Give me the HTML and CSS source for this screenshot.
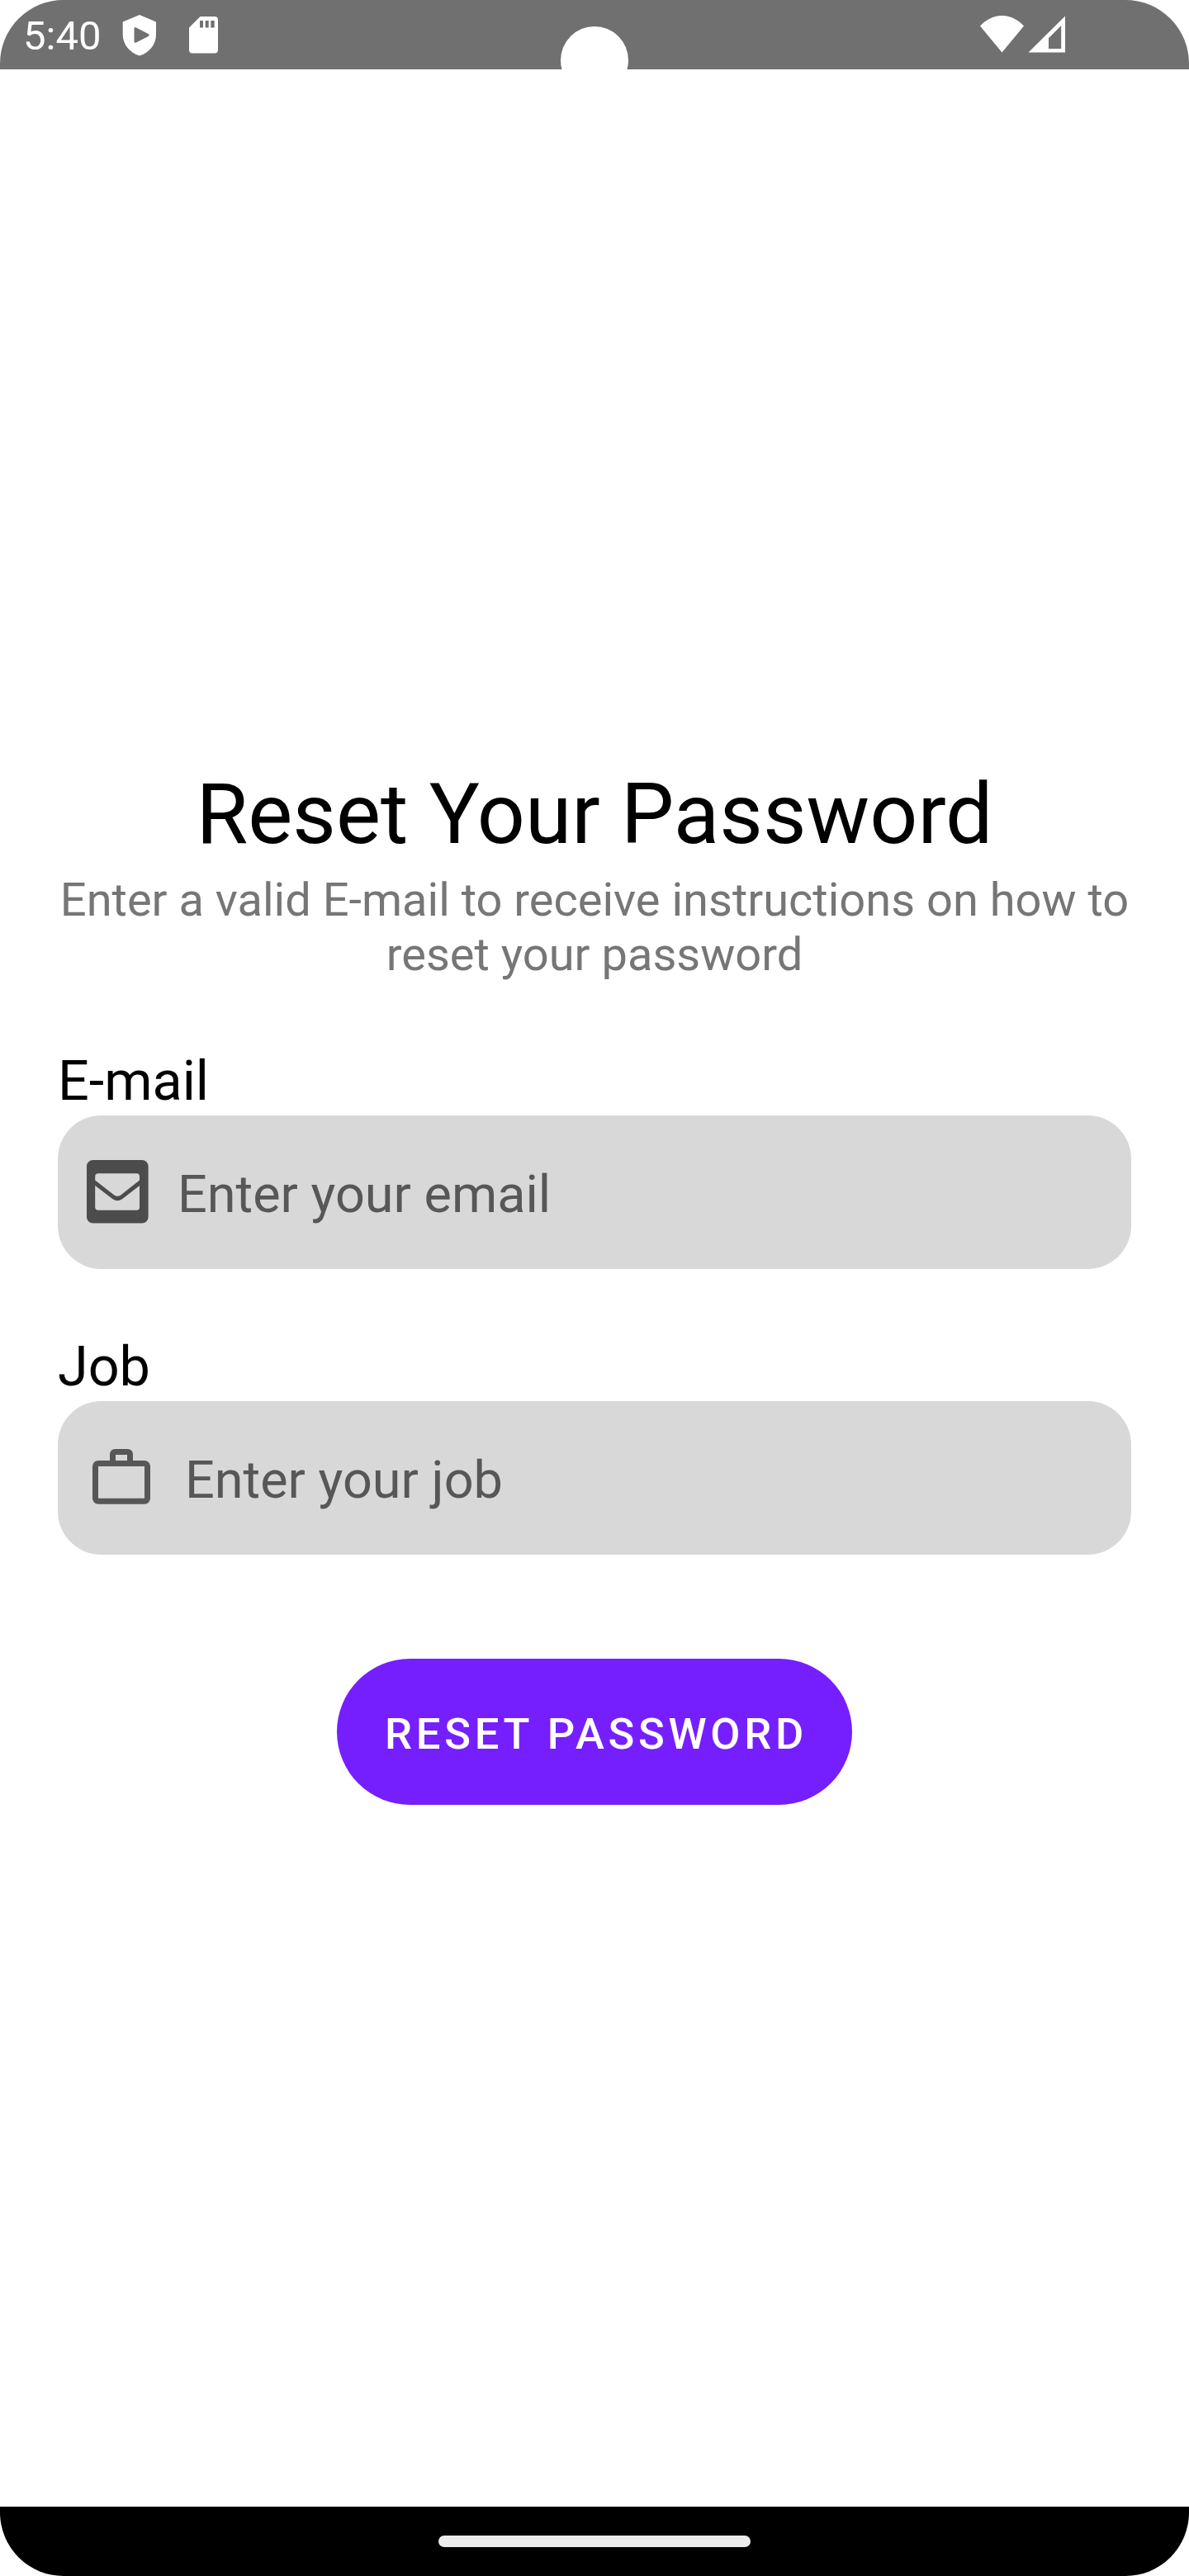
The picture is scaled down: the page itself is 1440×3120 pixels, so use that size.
FILE: index.html
```html
<!DOCTYPE html>
<html lang="en">
<head>
<meta charset="utf-8">
<title>Reset Your Password</title>
<link rel="stylesheet" href="styles.css">
</head>
<body>
<div class="screen">
  <header class="status-bar">
    <span class="clock">5:40</span>
    <svg class="shield" width="42" height="50" viewBox="0 0 42 50"><path fill="#fff" fill-rule="evenodd" d="M21 0 41 8.500V24C41 36 32.500 46 21 49.500 9.500 46 .7 36 .7 24V8.500ZM14.500 16.500V32.500Q14.700 34.500 17 33.500L32 25.700Q33.500 24.500 32 23.200L17 15.400Q14.700 14.500 14.500 16.500Z"/></svg>
    <svg class="sd-card" width="36" height="45" viewBox="0 0 36 45"><path fill="#fff" fill-rule="evenodd" d="M13.500 0H31Q35 0 35 4V40.500Q35 44.500 31 44.500H4Q0 44.500 0 40.500V13.500ZM13 5V13.500H17V5ZM19.700 5V13.500H23.700V5ZM26.300 5V13.500H30.700V5Z"/></svg>
    <svg class="wifi" width="54" height="45" viewBox="0 0 54 45"><path fill="#fff" d="M0 12.500C15-4.200 38-4.200 53 12.500L26.500 44.500Z"/></svg>
    <svg class="signal" width="46" height="45" viewBox="0 0 46 45"><path fill="#fff" fill-rule="evenodd" d="M45 .5V44.500H.5ZM40.200 12 25 27.200V40H40.200Z"/></svg>
    <span class="camera"></span>
  </header>
  <main class="content">
    <h1 class="title">Reset Your Password</h1>
    <p class="subtitle">Enter a valid E-mail to receive instructions on how to reset your password</p>
    <section class="group">
      <div class="label">E-mail</div>
      <div class="field">
        <svg class="mail" width="75" height="77" viewBox="0 0 75 77"><rect width="74.600" height="76.500" rx="7.500" fill="#4c4c4c"/><path fill="#d8d8d8" d="M14.500 16.300H60.500Q64 16.300 64 20V24.500L41.500 42.200Q37.300 45.300 33 42.200L10.200 24.500V20Q10.200 16.300 14 16.300ZM10.200 31 31.500 47.300Q37.300 51.200 43 47.300L64 31V57Q64 60.800 60.500 60.800H14Q10.200 60.800 10.200 57Z"/></svg>
        <span class="hint">Enter your email</span>
      </div>
    </section>
    <section class="group">
      <div class="label">Job</div>
      <div class="field">
        <svg class="briefcase" width="71" height="67" viewBox="0 0 71 67"><g fill="none" stroke="#575757" stroke-width="7"><rect x="3.500" y="17.500" width="63" height="45.700" rx="3.500"/><path d="M24.500 17.500V7Q24.500 3.500 28 3.500H42Q45.500 3.500 45.500 7V17.500"/></g></svg>
        <span class="hint">Enter your job</span>
      </div>
    </section>
    <button class="submit" type="button">RESET PASSWORD</button>
  </main>
  <footer class="nav-bar"><span class="handle"></span></footer>
</div>
</body>
</html>
```
FILE: styles.css
```css
body {
  margin: 0;
  background: #fff;
  font-family: Roboto, sans-serif;
}

.screen {
  display: flex;
  flex-direction: column;
  width: 1440px;
  height: 3120px;
  overflow: hidden;
  border-radius: 77px;
}

.status-bar {
  position: relative;
  display: flex;
  align-items: flex-start;
  box-sizing: border-box;
  height: 84px;
  padding: 15px 150px 0 28px;
  overflow: hidden;
  background: #707070;
}

.clock {
  width: 120px;
  color: #fff;
  font-size: 49px;
  line-height: 58px;
}

.shield { margin-top: 3px; }
.sd-card { margin: 5px 0 0 39px; }
.wifi { margin: 4px 4px 0 auto; }
.signal { margin: 4px -1px 0 0; }

.camera {
  position: absolute;
  top: 32px;
  left: 679px;
  width: 82px;
  height: 82px;
  border-radius: 50%;
  background: #fff;
}

.content {
  display: flex;
  flex: 1;
  flex-direction: column;
  padding: 842px 70px 0;
}

.title {
  margin: 0;
  font-size: 102px;
  font-weight: 400;
  line-height: 120px;
  text-align: center;
}

.subtitle {
  margin: 11px 0 81px;
  color: #767676;
  font-size: 56px;
  line-height: 66px;
  text-align: center;
}

.group { margin-bottom: 79px; }

.label {
  height: 81px;
  font-size: 66.5px;
  line-height: 78px;
}

.field {
  display: flex;
  align-items: flex-start;
  box-sizing: border-box;
  height: 186px;
  padding-left: 35px;
  border-radius: 52.5px;
  background: #d8d8d8;
}

.mail { margin: 54px 35px 0 0; }
.briefcase { margin: 58px 41px 0 7px; }

.hint {
  margin-top: 59px;
  color: #575757;
  font-size: 63px;
  line-height: 74px;
}

.submit {
  align-self: center;
  width: 624px;
  height: 177px;
  margin-top: 47px;
  padding: 4px 0 0 4px;
  border: 0;
  border-radius: 88.5px;
  background: #751fff;
  color: #fff;
  font-family: inherit;
  font-size: 52.5px;
  font-weight: 500;
  letter-spacing: 0.0893em;
  line-height: 62px;
}

.nav-bar {
  display: flex;
  align-items: flex-start;
  justify-content: center;
  height: 84px;
  background: #000;
}

.handle {
  width: 378px;
  height: 14px;
  margin-top: 35px;
  border-radius: 7px;
  background: #ececec;
}
```
